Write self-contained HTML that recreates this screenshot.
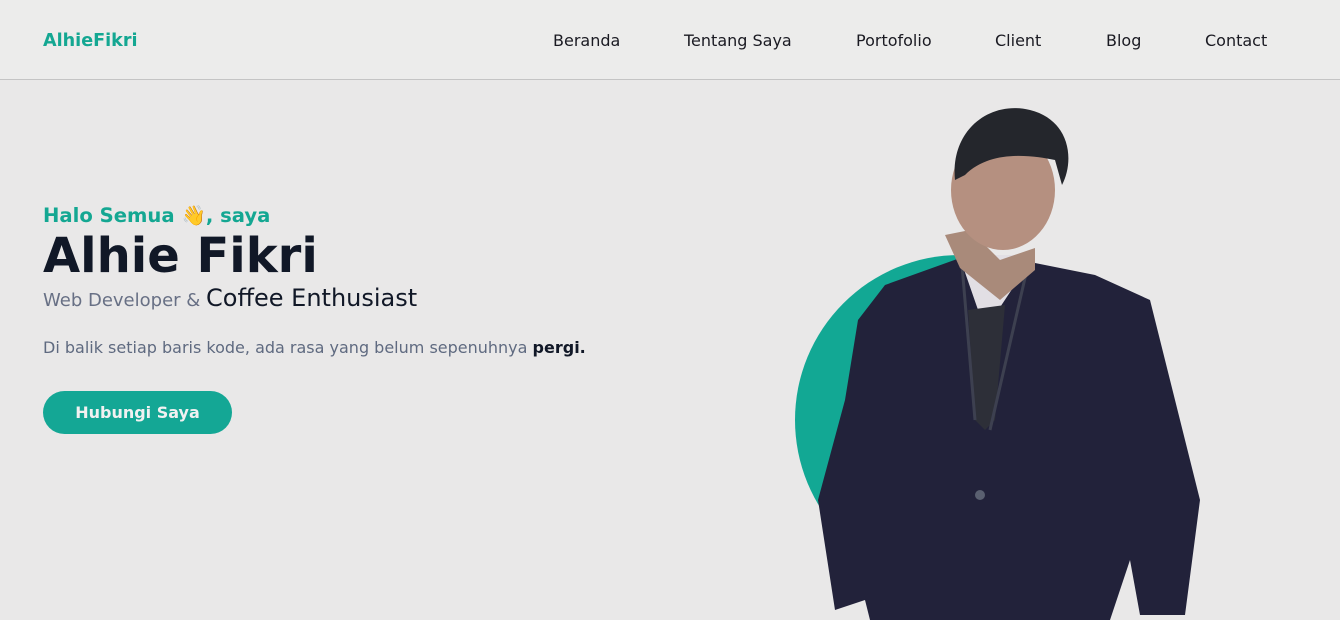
<!DOCTYPE html>
<html><head><meta charset="utf-8"><style>
*{margin:0;padding:0;box-sizing:border-box}
body{width:1340px;height:620px;overflow:hidden;background:#e9e8e8;font-family:"DejaVu Sans","Liberation Sans",sans-serif;position:relative}
header{position:absolute;left:0;top:0;width:1340px;height:80px;background:#ececeb;border-bottom:1px solid #c4c4c4}
.logo{position:absolute;left:43px;top:31px;font-size:17.6px;font-weight:bold;color:#14a792}
nav a{position:absolute;top:31px;font-size:16px;color:#1a1a22;text-decoration:none}
.t{position:absolute;left:43px;white-space:nowrap}
</style></head><body>
<header>
<div class="logo">AlhieFikri</div>
<nav><a style="left:553px">Beranda</a><a style="left:684px">Tentang Saya</a><a style="left:856px">Portofolio</a><a style="left:995px">Client</a><a style="left:1106px">Blog</a><a style="left:1205px">Contact</a></nav>
</header>
<div class="t" style="top:204px;font-size:19.6px;font-weight:bold;color:#14a792">Halo Semua <span style="color:#e8c04a">👋</span>, saya</div>
<div class="t" style="top:228px;font-size:48px;font-weight:bold;color:#111827">Alhie Fikri</div>
<div class="t" style="top:284px;font-size:18px;color:#687085">Web Developer &amp; <span style="font-size:24px;color:#111827">Coffee Enthusiast</span></div>
<div class="t" style="top:338px;font-size:16px;color:#5f6a80">Di balik setiap baris kode, ada rasa yang belum sepenuhnya <b style="color:#111827">pergi.</b></div>
<div class="t" style="top:391px;width:189px;height:43px;border-radius:22px;background:#14a795;color:#f1f1f1;font-size:16px;font-weight:bold;text-align:center;line-height:43px">Hubungi Saya</div>
<svg style="position:absolute;left:0;top:0" width="1340" height="620">
<circle cx="960" cy="420" r="165" fill="#12a894"/>
<path d="M960 255 L1035 255 L1020 320 L975 320Z" fill="#e2dfe4"/>
<path d="M885 285 L960 258 L985 330 L1030 262 L1095 275 L1150 300 L1175 400 L1200 500 L1185 615 L1140 615 L1130 560 L1110 620 L870 620 L865 600 L835 610 L818 500 L845 400 L858 320Z" fill="#22223a"/>
<path d="M968 310 L1005 305 L995 420 L985 430 L975 420Z" fill="#2d2f38"/>
<path d="M962 265 L975 420 M1028 265 L990 430" stroke="#3d4050" stroke-width="3" fill="none"/>
<path d="M945 235 L970 230 L1000 260 L1035 248 L1035 270 L1000 300 L960 268Z" fill="#a98a7a"/>
<ellipse cx="1003" cy="190" rx="52" ry="60" fill="#b59080"/>
<path d="M955 180 C950 130 990 100 1030 110 C1070 120 1075 160 1062 185 L1055 160 C1030 155 990 150 965 175Z" fill="#24262c"/>
<circle cx="980" cy="495" r="5" fill="#5a6070"/>
</svg>
</body></html>
